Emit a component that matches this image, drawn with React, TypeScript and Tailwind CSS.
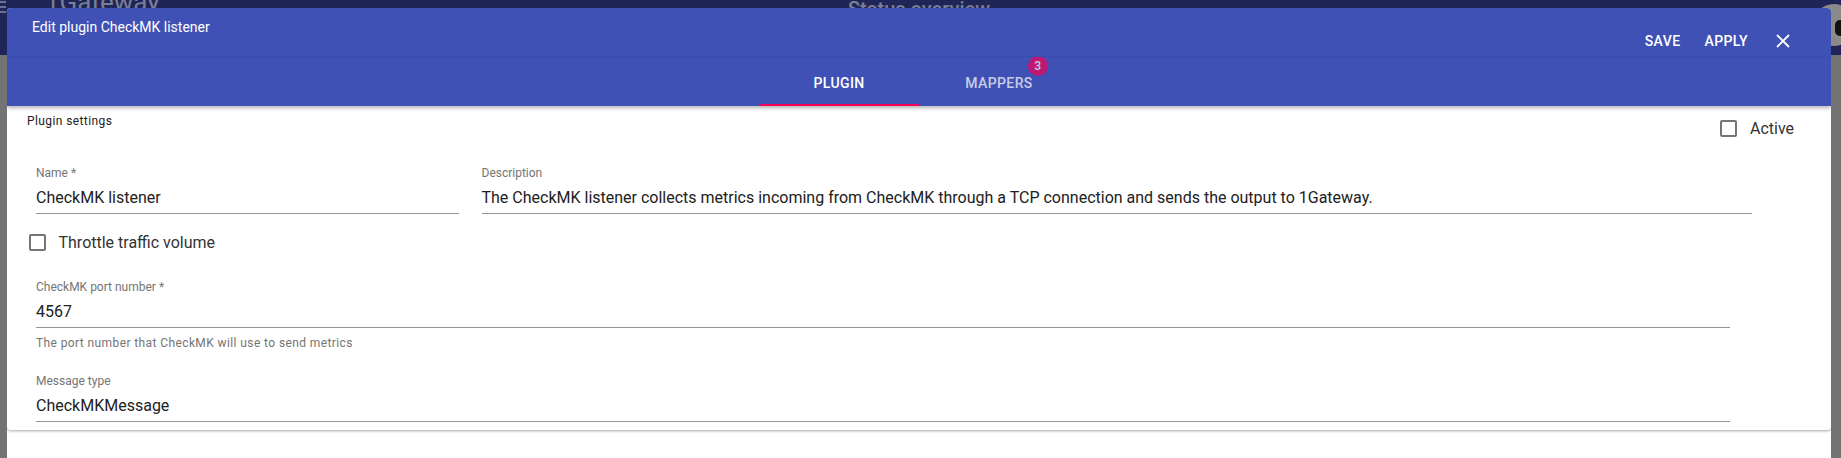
import React from "react";

function Box() {
  return <span className="block h-[17px] w-[17px] shrink-0 rounded-[2px] border-2 border-[#757575]" />;
}

function Field({
  label,
  value,
  helper,
  className = "",
}: {
  label: string;
  value: string;
  helper?: string;
  className?: string;
}) {
  return (
    <div className={className}>
      <p className="text-[12px] leading-[16px] text-[#757575]">{label}</p>
      <div className="mt-[6.5px] border-b border-[#949494] pb-[5.5px]">
        <p className="text-[16px] leading-[20px] text-[#212121]">{value}</p>
      </div>
      {helper && (
        <p className="mt-[7px] text-[12px] leading-[16px] tracking-[0.4px] text-[#757575]">{helper}</p>
      )}
    </div>
  );
}

export default function App() {
  return (
    <div className="relative h-[458px] w-[1841px] overflow-hidden bg-[#737373] font-['Roboto',sans-serif]">
      {/* page behind the dialog */}
      <div className="relative h-[55px] bg-[#1f2557]">
        <div className="absolute left-0 top-[1px] flex w-[6px] flex-col gap-[3px]">
          <span className="h-[2px] bg-[#6d7190]" />
          <span className="h-[2px] bg-[#6d7190]" />
          <span className="h-[2px] bg-[#6d7190]" />
        </div>
        <p className="absolute left-[45px] top-[-13px] text-[26px] leading-[30px] text-[#7b7f95]">1Gateway</p>
        <p className="absolute left-[848px] top-[-3px] text-[20px] font-medium leading-[24px] text-[#7b7f95]">
          Status overview
        </p>
        <div className="absolute left-[1813px] top-[4px] h-[42px] w-[42px] rounded-full bg-[#8a8a8a]">
          <div className="ml-[22px] mt-[16px] h-[16px] w-[10px] rounded-full bg-[#111]" />
        </div>
      </div>

      {/* dialog */}
      <div className="absolute bottom-0 left-[7px] top-[8px] w-[1824px] overflow-hidden rounded-t-[4px] bg-white">
        <header className="relative z-10 bg-[#3f51b5] text-white shadow-[0_2px_4px_rgba(0,0,0,0.3)]">
          <div className="flex h-[49px] items-start border-b border-[#3b4cb0]">
            <h2 className="pl-[25px] pt-[9px] text-[14px] leading-[20px]">Edit plugin CheckMK listener</h2>
            <div className="ml-auto mr-[41px] mt-[23px] flex h-[20px] items-center text-[14px] font-medium leading-[20px] tracking-[0.4px]">
              <button className="mr-[24px]">SAVE</button>
              <button className="mr-[28px]">APPLY</button>
              <svg width="14" height="14" viewBox="0 0 14 14">
                <path d="M1 1 L13 13 M13 1 L1 13" stroke="white" strokeWidth="1.8" />
              </svg>
            </div>
          </div>
          <div className="flex h-[49px] justify-center overflow-hidden">
            <div className="relative flex w-[160px] items-center justify-center pt-[2px] text-[14px] font-medium leading-[20px] tracking-[0.4px]">
              PLUGIN
              <span className="absolute bottom-0 left-0 h-[2px] w-full bg-[#f50057]" />
            </div>
            <div className="flex w-[160px] items-center justify-center pt-[2px] text-[14px] font-medium leading-[20px] tracking-[0.4px] opacity-70">
              <span className="relative">
                MAPPERS
                <span className="absolute -right-[15px] -top-[16.5px] flex h-[20px] w-[20px] items-center justify-center rounded-full bg-[#f50057] text-[12px] font-medium tracking-normal">
                  3
                </span>
              </span>
            </div>
          </div>
        </header>

        <section className="rounded-b-[4px] pb-[8px] pt-[7px] shadow-[0_1px_3px_rgba(0,0,0,0.35)]">
          <div className="flex items-start">
            <p className="w-[1713px] pl-[20px] text-[12px] leading-[16px] tracking-[0.4px] text-[#222]">
              Plugin settings
            </p>
            <label className="mt-[7px] flex items-center gap-[13px] text-[16px] leading-[17px] text-[#333]">
              <Box />
              Active
            </label>
          </div>

          <div className="mt-[28px] flex pl-[29px]">
            <Field label="Name *" value="CheckMK listener" className="w-[423px]" />
            <Field
              label="Description"
              value="The CheckMK listener collects metrics incoming from CheckMK through a TCP connection and sends the output to 1Gateway."
              className="ml-[22.5px] w-[1270px]"
            />
          </div>

          <label className="ml-[21.5px] mt-[20px] flex items-center gap-[13px] text-[16px] leading-[17px] text-[#333]">
            <Box />
            Throttle traffic volume
          </label>

          <Field
            label="CheckMK port number *"
            value="4567"
            helper="The port number that CheckMK will use to send metrics"
            className="ml-[29px] mt-[28px] w-[1694px]"
          />
          <Field label="Message type" value="CheckMKMessage" className="ml-[29px] mt-[22px] w-[1694px]" />
        </section>
      </div>
    </div>
  );
}
